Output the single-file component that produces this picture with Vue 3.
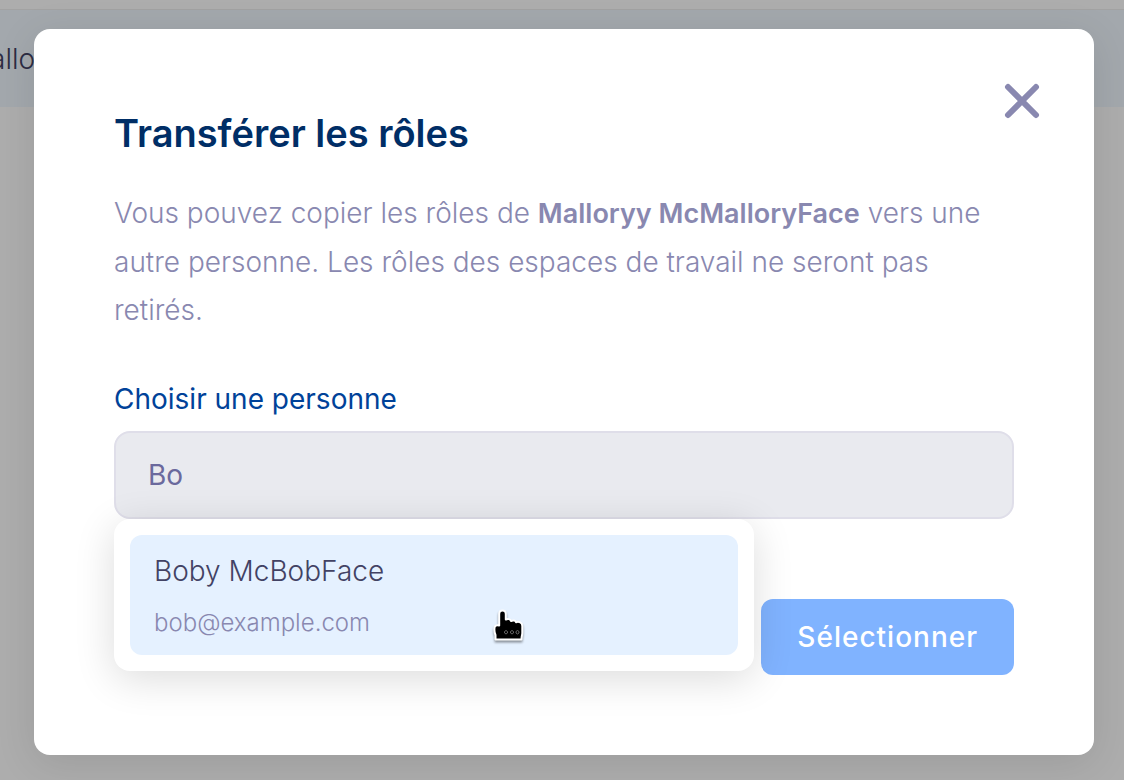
<script setup>
import { ref } from 'vue'

const query = ref('Bo')
const people = [{ name: 'Boby McBobFace', email: 'bob@example.com' }]
</script>

<template>
  <div class="page">
    <div class="member-row"><span class="member-name">allo</span></div>
    <div class="overlay">
      <section class="modal" role="dialog" aria-modal="true" aria-labelledby="dialog-title">
        <button class="close" type="button" aria-label="Fermer">
          <svg viewBox="0 0 36 36" width="36" height="36" fill="none" stroke="currentColor" stroke-width="6" stroke-linecap="round">
            <path d="M4 4 32 32M32 4 4 32" />
          </svg>
        </button>
        <h2 id="dialog-title">Transférer les rôles</h2>
        <p class="intro">
          Vous pouvez copier les rôles de <strong>Malloryy McMalloryFace</strong> vers une autre
          personne. Les rôles des espaces de travail ne seront pas retirés.
        </p>
        <form @submit.prevent>
          <label for="person">Choisir une personne</label>
          <div class="field">
            <input id="person" v-model="query" type="text" autocomplete="off" />
            <ul class="suggestions">
              <li v-for="person in people" :key="person.email">
                <button class="suggestion" type="button">
                  <span class="name">{{ person.name }}</span>
                  <span class="email">{{ person.email }}</span>
                </button>
                <svg class="pointer" viewBox="0 0 32 34" width="32" height="34" aria-hidden="true">
                  <path
                    d="M9.500 1.500C11.500 1.500 12.800 2.800 12.800 4.800V10.500C15 9.500 17.500 10 18 12C20 11 22.500 11.500 23 13.200C26 12.200 29.300 13.500 29.300 17V24C29.300 26 28.500 27 28.500 30.500H2.500V26C1.500 24 1.300 21 1.500 19C1.700 16.800 3.500 15.800 6.200 16.500V4.800C6.200 2.800 7.500 1.500 9.500 1.500Z"
                    fill="#000" stroke="#fff" stroke-width="2" stroke-linejoin="round"
                  />
                  <path
                    d="M11.500 22.500Q13 20.500 14.500 22.500V24Q13 26 11.500 24ZM17.500 22.500Q19 20.500 20.500 22.500V24Q19 26 17.500 24ZM23 22.500Q24.500 20.500 26 22.500V24Q24.500 26 23 24Z"
                    fill="none" stroke="#666" stroke-width="1"
                  />
                </svg>
              </li>
            </ul>
          </div>
          <div class="actions">
            <button class="submit" type="submit">Sélectionner</button>
          </div>
        </form>
      </section>
    </div>
  </div>
</template>

<style>
body {
  margin: 0;
  background: #fff;
}
</style>

<style scoped>
* {
  box-sizing: border-box;
}

.page {
  position: relative;
  min-height: 100vh;
  padding-top: 9px;
  overflow: hidden;
  font-family: Inter, "Liberation Sans", sans-serif;
  font-size: 28px;
  font-weight: 300;
  background: #fff;
}

.member-row {
  display: flex;
  align-items: center;
  height: 98px;
  border-top: 1px solid #efefef;
  background: #f0f8ff;
}

.member-name {
  margin-left: -10px;
  color: #424264;
}

.overlay {
  position: absolute;
  inset: 0;
  padding: 29px 30px 25px 34px;
  background: rgba(0, 0, 0, 0.32);
}

.modal {
  position: relative;
  padding: 80px;
  border-radius: 16px;
  background: #fff;
  box-shadow: 0 8px 40px rgba(0, 0, 0, 0.1);
}

button {
  font: inherit;
  border: 0;
  cursor: pointer;
}

.close {
  position: absolute;
  top: 54px;
  right: 54px;
  display: flex;
  padding: 0;
  color: #8988b0;
  background: none;
}

h2 {
  margin: 0 0 32px;
  font-size: 38px;
  font-weight: 600;
  line-height: 48px;
  color: #002e66;
}

.intro {
  margin: 0 0 45px;
  padding-right: 20px;
  line-height: 48px;
  color: #8988b0;
}

strong {
  font-size: 27px;
  font-weight: 600;
}

label {
  display: block;
  margin-bottom: 12px;
  font-weight: 400;
  line-height: 40px;
  color: #004299;
}

.field {
  position: relative;
}

input {
  display: block;
  width: 100%;
  height: 88px;
  padding: 0 32px;
  border: 2px solid #dfdee9;
  border-radius: 16px;
  outline: 0;
  font: inherit;
  font-weight: 400;
  color: #6b699d;
  background: #e9eaef;
}

.suggestions {
  position: absolute;
  top: 100%;
  left: 0;
  width: 640px;
  max-width: 100%;
  margin: 0;
  padding: 16px;
  border-radius: 16px;
  list-style: none;
  background: #fff;
  box-shadow: 0 8px 40px rgba(0, 0, 0, 0.14);
}

li {
  position: relative;
}

.suggestion {
  display: flex;
  flex-direction: column;
  gap: 14px;
  width: 100%;
  padding: 16px 24px 14px;
  border-radius: 12px;
  text-align: left;
  background: #e5f1ff;
}

.name {
  line-height: 40px;
  color: #424264;
}

.email {
  font-size: 24px;
  line-height: 36px;
  color: #8988b0;
}

.pointer {
  position: absolute;
  top: 74px;
  left: 363px;
  filter: drop-shadow(0 2px 1px rgba(0, 0, 0, 0.4));
}

.actions {
  display: flex;
  justify-content: flex-end;
  margin-top: 80px;
}

.submit {
  height: 76px;
  padding: 0 36px;
  border-radius: 12px;
  font-weight: 500;
  letter-spacing: 1px;
  color: #fff;
  background: #80b3ff;
}
</style>
